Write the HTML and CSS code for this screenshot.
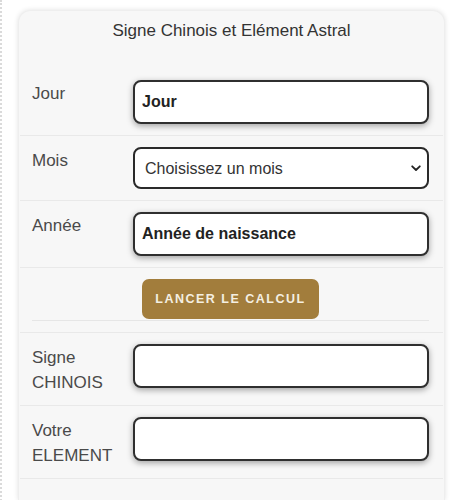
FILE: index.html
```html
<!DOCTYPE html>
<html lang="fr">
<head>
<meta charset="utf-8">
<title>Signe Chinois et Elément Astral</title>
<link rel="stylesheet" href="styles.css">
</head>
<body>
<div class="page">
  <div class="card">
    <div class="title">Signe Chinois et Elément Astral</div>
    <div class="row first">
      <label class="lbl" for="jour">Jour</label>
      <input class="field" id="jour" type="text" placeholder="Jour">
    </div>
    <div class="row">
      <label class="lbl" for="mois">Mois</label>
      <div class="select-wrap">
        <select class="field select" id="mois">
          <option>Choisissez un mois</option>
        </select>
        <svg class="chev" width="10" height="7" viewBox="0 0 10 7"><path d="M1.2 1.3 L5 5 L8.8 1.3" fill="none" stroke="#222" stroke-width="1.8" stroke-linecap="round" stroke-linejoin="round"/></svg>
      </div>
    </div>
    <div class="row">
      <label class="lbl" for="annee">Année</label>
      <input class="field" id="annee" type="text" placeholder="Année de naissance">
    </div>
    <div class="row">
      <div class="btn-cell">
        <button class="btn" type="button">LANCER LE CALCUL</button>
      </div>
    </div>
    <div class="row">
      <label class="lbl" for="signe">Signe<br>CHINOIS</label>
      <input class="field" id="signe" type="text">
    </div>
    <div class="row">
      <label class="lbl" for="element">Votre<br>ELEMENT</label>
      <input class="field" id="element" type="text">
    </div>
    <div class="row last"></div>
  </div>
</div>
</body>
</html>
```
FILE: styles.css
```css
html, body {
  margin: 0;
  padding: 0;
  background: #ffffff;
}
body {
  font-family: "Liberation Sans", Arial, sans-serif;
  color: #333;
}
.page {
  min-height: 500px;
  border-left: 2px dotted #dadada;
  padding: 11px 0 0 16px;
  box-sizing: border-box;
  width: 445px;
}
.card {
  background: #f7f7f7;
  border-radius: 12px 12px 0 0;
  box-shadow: 0 -1px 5px rgba(0, 0, 0, 0.12);
  border-left: 1px solid #eeeeee;
  border-right: 1px solid #eeeeee;
  padding: 0 1px;
  min-height: 489px;
}
.title {
  text-align: center;
  font-size: 17px;
  line-height: 20px;
  padding: 10px 0 28px;
  color: #333;
}
.row {
  display: flex;
  align-items: flex-start;
  padding: 11px 11px 11px 12px;
  border-top: 1px solid #e9e9e9;
}
.row.first {
  border-top: none;
}
.lbl {
  width: 101px;
  flex: none;
  font-size: 17px;
  line-height: 25px;
  color: #4a4a4a;
  margin: 1px 0 -1px;
}
.field {
  box-sizing: border-box;
  width: 296px;
  height: 44px;
  border: 2px solid #2f2f2f;
  border-radius: 8px;
  background: #ffffff;
  box-shadow: 0 2px 6px rgba(0, 0, 0, 0.35);
  font-family: "Liberation Sans", Arial, sans-serif;
  font-size: 16px;
  font-weight: bold;
  color: #222;
  padding: 0 7px;
  outline: none;
}
.field::placeholder {
  color: #222;
  opacity: 1;
  font-weight: bold;
}
.select-wrap {
  position: relative;
  width: 296px;
}
.select {
  appearance: none;
  -webkit-appearance: none;
  height: 42px;
  font-weight: normal;
  color: #333;
  padding: 0 10px;
  box-shadow: none;
  border-color: #2a2a2a;
}
.chev {
  position: absolute;
  right: 8px;
  top: 18px;
  pointer-events: none;
}
.btn-cell {
  width: 397px;
  padding: 0 0 1px 110px;
  box-sizing: border-box;
  border-bottom: 1px solid #e6e6e6;
}
.btn {
  width: 177px;
  height: 40px;
  border: none;
  border-radius: 7px;
  background: #a27d3c;
  color: #f4efe2;
  font-family: "Liberation Sans", Arial, sans-serif;
  font-size: 12.5px;
  font-weight: bold;
  letter-spacing: 1.5px;
  cursor: pointer;
}
.row.last {
  padding: 0;
  min-height: 22px;
}
```
